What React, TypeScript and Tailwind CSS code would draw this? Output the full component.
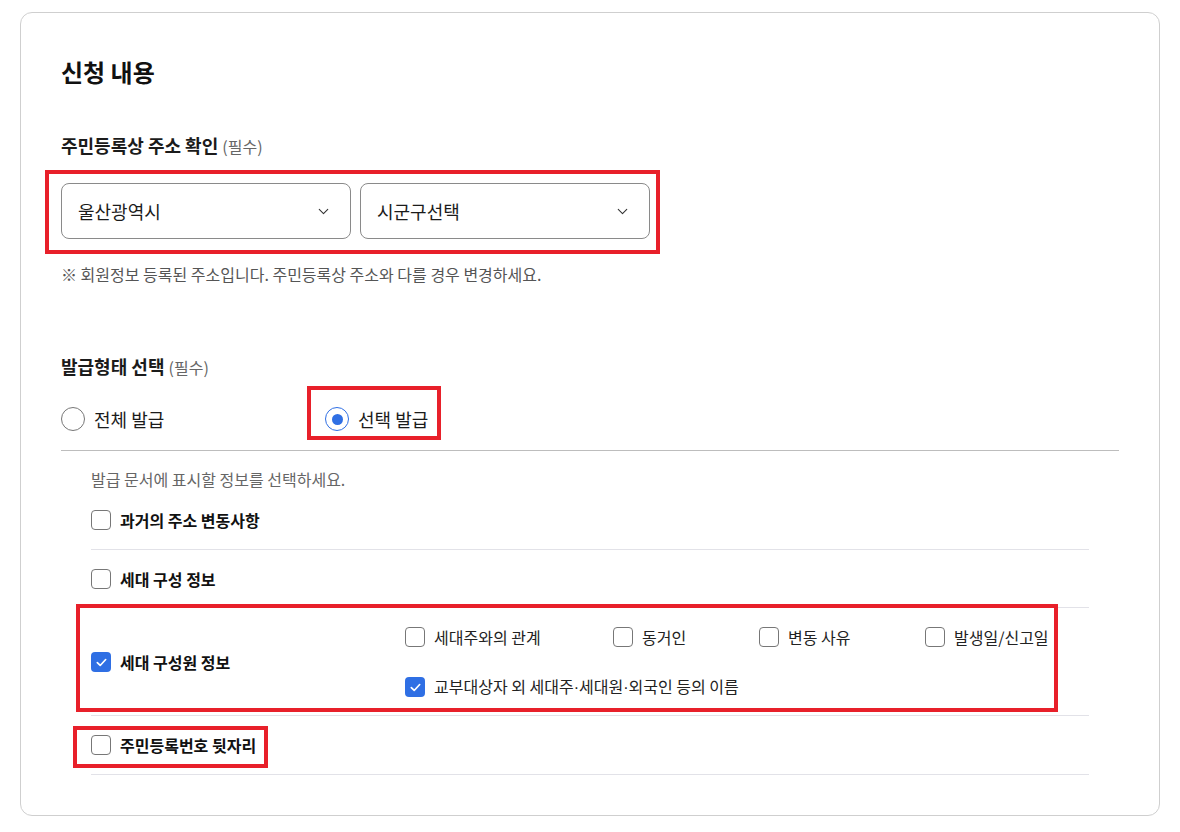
import { ChevronDown } from "lucide-react";

const FONT = "font-['Noto_Sans_CJK_KR','Noto_Sans',sans-serif]";

function Select({ value }: { value: string }) {
  return (
    <div className="flex h-[56px] w-[290px] items-center justify-between rounded-[8px] border border-[#8a8a8a] pl-[16px] pr-[18px] text-[18px] leading-[26px] text-[#1b1b1b]">
      <span>{value}</span>
      <ChevronDown size={17} strokeWidth={1.5} className="text-[#333]" />
    </div>
  );
}

function Radio({ checked, label }: { checked?: boolean; label: string }) {
  return (
    <label className="flex h-[24px] items-center gap-[9px] text-[18px] leading-[24px] text-[#1b1b1b]">
      <span
        className={
          checked
            ? "flex h-[24px] w-[24px] items-center justify-center rounded-full border border-[#2f6fe4]"
            : "flex h-[24px] w-[24px] items-center justify-center rounded-full border border-[#777]"
        }
      >
        {checked && <span className="h-[11px] w-[11px] rounded-full bg-[#2f6fe4]" />}
      </span>
      {label}
    </label>
  );
}

function Check({ checked, label, bold }: { checked?: boolean; label: React.ReactNode; bold?: boolean }) {
  return (
    <label
      className={
        bold
          ? "flex h-[20px] items-center gap-[9px] text-[16px] font-bold leading-[20px] text-[#111]"
          : "flex h-[20px] items-center gap-[9px] text-[16px] leading-[20px] text-[#222]"
      }
    >
      {checked ? (
        <span className="flex h-[20px] w-[20px] shrink-0 items-center justify-center rounded-[4px] bg-[#2f6fe4]">
          <svg width="13" height="13" viewBox="0 0 14 14" fill="none">
            <path d="M2.5 7.2 5.6 10.2 11.5 3.8" stroke="#fff" strokeWidth="1.8" strokeLinecap="round" strokeLinejoin="round" />
          </svg>
        </span>
      ) : (
        <span className="h-[20px] w-[20px] shrink-0 rounded-[4px] border border-[#777] bg-white" />
      )}
      <span>{label}</span>
    </label>
  );
}

const Dot = () => <span className="font-['Liberation_Sans',sans-serif]">·</span>;

export default function App() {
  return (
    <div className={`${FONT} relative min-h-[832px] bg-white px-[20px] pt-[12px]`}>
      <div className="rounded-[12px] border border-[#cfcfcf] pb-[40px] pl-[40px] pr-[40px] pt-[43px]">
        <h2 className="text-[24px] font-bold leading-[32px] text-[#111]">신청 내용</h2>

        {/* 주소 */}
        <div className="mt-[44px] text-[18px] font-bold leading-[26px] text-[#1b1b1b]">
          주민등록상 주소 확인 <span className="text-[16px] font-normal text-[#666]">(필수)</span>
        </div>
        <div className="mt-[24px] flex gap-[9px]">
          <Select value="울산광역시" />
          <Select value="시군구선택" />
        </div>
        <p className="mt-[24px] text-[16px] leading-[22px] text-[#555]">
          ※ 회원정보 등록된 주소입니다. 주민등록상 주소와 다를 경우 변경하세요.
        </p>

        {/* 발급형태 */}
        <div className="mt-[68px] text-[18px] font-bold leading-[26px] text-[#1b1b1b]">
          발급형태 선택 <span className="text-[16px] font-normal text-[#666]">(필수)</span>
        </div>
        <div className="mt-[27px] flex items-center">
          <div className="w-[264px]">
            <Radio label="전체 발급" />
          </div>
          <Radio checked label="선택 발급" />
        </div>
        <div className="mt-[19px] border-t border-[#bdbdbd]" />

        <div className="px-[30px]">
          <p className="mt-[17px] text-[16px] leading-[22px] text-[#666]">
            발급 문서에 표시할 정보를 선택하세요.
          </p>
          <div className="border-b border-[#e2e2e8] pb-[19px] pt-[20px]">
            <Check bold label="과거의 주소 변동사항" />
          </div>
          <div className="border-b border-[#e2e2e8] pb-[18px] pt-[19px]">
            <Check bold label="세대 구성 정보" />
          </div>
          <div className="flex items-center border-b border-[#e2e2e8] pb-[18px] pt-[19px]">
            <div className="w-[314px]">
              <Check bold checked label="세대 구성원 정보" />
            </div>
            <div className="grid grid-cols-[208px_146px_166px_auto] gap-y-[30px]">
              <Check label="세대주와의 관계" />
              <Check label="동거인" />
              <Check label="변동 사유" />
              <Check label="발생일/신고일" />
              <div className="col-span-4">
                <Check
                  checked
                  label={
                    <>
                      교부대상자 외 세대주<Dot />세대원<Dot />외국인 등의 이름
                    </>
                  }
                />
              </div>
            </div>
          </div>
          <div className="border-b border-[#e2e2e8] pb-[19px] pt-[19px]">
            <Check bold label="주민등록번호 뒷자리" />
          </div>
        </div>
      </div>

      {/* annotation boxes */}
      <div className="pointer-events-none absolute left-[45px] top-[170px] h-[84px] w-[615px] border-[4px] border-[#e8202a]" />
      <div className="pointer-events-none absolute left-[307px] top-[386px] h-[54px] w-[134px] border-[4px] border-[#e8202a]" />
      <div className="pointer-events-none absolute left-[76px] top-[604px] h-[108px] w-[982px] border-[4px] border-[#e8202a]" />
      <div className="pointer-events-none absolute left-[73px] top-[726px] h-[42px] w-[195px] border-[4px] border-[#e8202a]" />
    </div>
  );
}
